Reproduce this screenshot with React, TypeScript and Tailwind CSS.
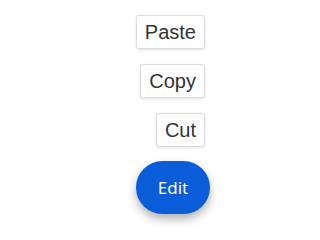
const actions = ["Paste", "Copy", "Cut"];

export default function App() {
  return (
    <div className="flex h-[229px] w-[226px] flex-col items-end justify-end bg-white pb-[15px] pr-4 font-['Liberation_Sans',Arial,sans-serif]">
      {/* Speed dial actions */}
      <div className="mr-[5px] flex flex-col items-end gap-[15px]">
        {actions.map((a) => (
          <button
            key={a}
            className="h-[34px] rounded-[3px] border border-[#dcdcdc] bg-white px-[8px] text-[20px] leading-[23px] text-[#333] shadow-[0_1px_3px_rgba(0,0,0,0.12)]"
          >
            {a}
          </button>
        ))}
      </div>

      {/* Main button */}
      <button className="mt-[14px] flex h-[53px] w-[74px] items-center justify-center rounded-full bg-[#0b5cd8] font-['Noto_Sans',sans-serif] text-[17px] text-white shadow-[0_5px_10px_rgba(0,0,0,0.3)]">
        Edit
      </button>
    </div>
  );
}
